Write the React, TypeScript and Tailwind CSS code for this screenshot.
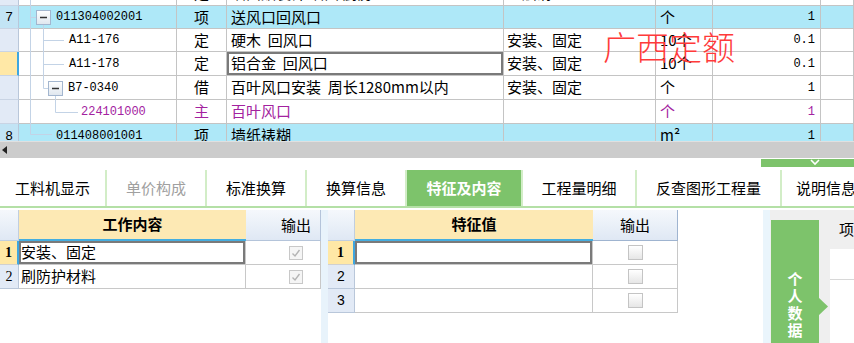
import React from 'react'

const cjk = "font-['Noto_Sans_CJK_SC',sans-serif]"
const mono = "font-['Liberation_Mono','Noto_Sans_CJK_SC',monospace]"

type Row = {
  num: string
  code: string
  type: string
  name: string
  feat: string
  unit: string
  qty: string
  h: string
  kind: 'plain' | 'group' | 'sel' | 'main'
  indent: string
}

const rows: Row[] = [
  { num: '', code: 'A11-200', type: '定', name: '墙面贴装饰 墙面 厨房', feat: '基层清理', unit: '100m²', qty: '0.00', h: 'h-[24px]', kind: 'plain', indent: 'pl-[50px]' },
  { num: '7', code: '011304002001', type: '项', name: '送风口回风口', feat: '', unit: '个', qty: '1', h: 'h-[23px]', kind: 'group', indent: 'pl-[37px]' },
  { num: '', code: 'A11-176', type: '定', name: '硬木  回风口', feat: '安装、固定', unit: '10个', qty: '0.1', h: 'h-[23px]', kind: 'plain', indent: 'pl-[50px]' },
  { num: '', code: 'A11-178', type: '定', name: '铝合金  回风口', feat: '安装、固定', unit: '10个', qty: '0.1', h: 'h-[24px]', kind: 'sel', indent: 'pl-[50px]' },
  { num: '', code: 'B7-0340', type: '借', name: '百叶风口安装  周长1280mm以内', feat: '安装、固定', unit: '个', qty: '1', h: 'h-[24px]', kind: 'plain', indent: 'pl-[49px]' },
  { num: '', code: '224101000', type: '主', name: '百叶风口', feat: '', unit: '个', qty: '1', h: 'h-[24px]', kind: 'main', indent: 'pl-[62px]' },
  { num: '8', code: '011408001001', type: '项', name: '墙纸裱糊', feat: '', unit: 'm²', qty: '1', h: 'h-[24px]', kind: 'group', indent: 'pl-[37px]' },
]

function TreeLines() {
  return (
    <svg className="absolute left-[19px] top-0 pointer-events-none" width="158" height="141">
      <defs>
        <linearGradient id="bx" x1="0" y1="0" x2="0" y2="1">
          <stop offset="0" stopColor="#ffffff" />
          <stop offset="1" stopColor="#dfe6ee" />
        </linearGradient>
      </defs>
      <g stroke="#c3d3e6" strokeWidth="1" fill="none">
        <line x1="11.5" y1="0" x2="11.5" y2="134.5" />
        <line x1="11.5" y1="17.5" x2="17" y2="17.5" />
        <line x1="11.5" y1="134.5" x2="33" y2="134.5" />
        <line x1="24.5" y1="25" x2="24.5" y2="88.5" />
        <line x1="24.5" y1="40.5" x2="45" y2="40.5" />
        <line x1="24.5" y1="64.5" x2="45" y2="64.5" />
        <line x1="24.5" y1="88.5" x2="29.5" y2="88.5" />
        <line x1="36.5" y1="96" x2="36.5" y2="112.5" />
        <line x1="36.5" y1="112.5" x2="59" y2="112.5" />
      </g>
      <rect x="17.5" y="10.5" width="14" height="14" fill="url(#bx)" stroke="#a3b6cf" />
      <line x1="21" y1="17.5" x2="28" y2="17.5" stroke="#333" strokeWidth="1.5" />
      <rect x="29.5" y="81.5" width="14" height="14" fill="url(#bx)" stroke="#a3b6cf" />
      <line x1="33" y1="88.5" x2="40" y2="88.5" stroke="#333" strokeWidth="1.5" />
    </svg>
  )
}

function TopGrid() {
  return (
    <div className="relative h-[141px] overflow-hidden bg-white">
      <div className="-mt-[18px]">
        {rows.map((r, i) => {
          const bg = r.kind === 'group' ? 'bg-[#aee8f8]' : 'bg-white'
          const color = r.kind === 'main' ? 'text-[#a3229f]' : 'text-black'
          const numCls =
            r.kind === 'group'
              ? 'bg-[#c2e4f5] border-r border-[#b9c7da]'
              : r.kind === 'sel'
                ? 'bg-[#ffe8a6] border-r-2 border-[#3ea6e0]'
                : 'bg-[#e2eaf6] border-r border-[#b9c7da]'
          const line = 'border-r border-b border-[#c4c4c4]'
          return (
            <div key={i} className={`flex ${r.h} ${bg} ${color} text-[15px] ${cjk}`}>
              <div className={`w-[19px] shrink-0 flex items-center justify-center border-b border-b-[#c9d4e4] text-[13px] text-black font-['Liberation_Sans',sans-serif] ${numCls}`}>
                {r.num}
              </div>
              <div className={`w-[158px] shrink-0 flex items-center ${line} ${r.indent} ${mono} text-[12px]`}>{r.code}</div>
              <div className={`w-[50px] shrink-0 flex items-center justify-center ${line}`}>{r.type}</div>
              <div className={`w-[277px] shrink-0 flex items-center pl-[4px] whitespace-pre ${line} ${r.kind === 'sel' ? 'shadow-[inset_0_0_0_2px_#7a7a7a]' : ''}`}>
                {r.name}
              </div>
              <div className={`w-[152px] shrink-0 flex items-center pl-[3px] ${line}`}>{r.feat}</div>
              <div className={`w-[57px] shrink-0 flex items-center pl-[4px] ${line}`}>{r.unit}</div>
              <div className={`w-[108px] shrink-0 flex items-center justify-end pr-[5px] ${line} ${mono} text-[12px]`}>{r.qty}</div>
              <div className={`flex-1 ${line}`}></div>
            </div>
          )
        })}
      </div>
      <TreeLines />
      <div className={`absolute left-[603px] top-[26px] text-[33px] leading-[40px] text-[#ff3a3a] font-extralight pointer-events-none ${cjk}`}>
        广西定额
      </div>
    </div>
  )
}

function Scrollbar() {
  return (
    <div className="h-[17px] bg-[#cccccc] flex items-center border-t border-[#e0e0e0]">
      <svg width="8" height="10" className="ml-[1px]">
        <path d="M6 1 L1 5 L6 9 Z" fill="#222" />
      </svg>
    </div>
  )
}

const tabs: { label: string; w: string; state?: 'dim' | 'on' }[] = [
  { label: '工料机显示', w: 'w-[107px]' },
  { label: '单价构成', w: 'w-[100px]', state: 'dim' },
  { label: '标准换算', w: 'w-[100px]' },
  { label: '换算信息', w: 'w-[100px]' },
  { label: '特征及内容', w: 'w-[116px]', state: 'on' },
  { label: '工程量明细', w: 'w-[114px]' },
  { label: '反查图形工程量', w: 'w-[145px]' },
  { label: '说明信息', w: 'w-[90px]' },
]

function Tabs() {
  return (
    <div className={`flex h-[38px] border-b-2 border-[#b4e0a6] overflow-hidden ${cjk}`}>
      {tabs.map((t) => (
        <div
          key={t.label}
          className={`${t.w} shrink-0 flex items-center justify-center text-[15px] whitespace-nowrap border-r-2 border-[#d2edc7] ${
            t.state === 'on' ? 'bg-[#7dc36b] text-white font-bold' : t.state === 'dim' ? 'text-[#a0a0a0] bg-white' : 'text-black bg-white'
          }`}
        >
          {t.label}
        </div>
      ))}
    </div>
  )
}

function Check({ on }: { on?: boolean }) {
  return on ? (
    <div className="w-[14px] h-[14px] border border-[#c8c8c8] bg-[#f5f5f5] flex items-center justify-center">
      <svg width="10" height="10" viewBox="0 0 10 10">
        <path d="M1.5 5.5 L4 8 L8.5 2" stroke="#b4b4b4" strokeWidth="1.4" fill="none" />
      </svg>
    </div>
  ) : (
    <div className="w-[15px] h-[15px] border border-[#c4c4c4] bg-gradient-to-b from-white to-[#e6e6e6]" />
  )
}

const hdrBlue = 'bg-gradient-to-b from-[#f5f8fc] to-[#dfe8f4]'

function LeftTable() {
  const items = ['安装、固定', '刷防护材料']
  return (
    <div className={`w-[321px] shrink-0 bg-white ${cjk}`}>
      <div className="flex h-[31px]">
        <div className={`w-[19px] shrink-0 ${hdrBlue} border-r border-b border-[#c0cee0]`} />
        <div className="w-[227px] shrink-0 bg-[#fde9b4] border-b-2 border-[#45aee0] flex items-center justify-center text-[15px] font-bold">
          工作内容
        </div>
        <div className={`w-[75px] shrink-0 ${hdrBlue} border-b border-r border-[#b4c4da] flex items-center justify-end pr-[9px] text-[15px]`}>
          输出
        </div>
      </div>
      {items.map((t, i) => (
        <div key={t} className="flex h-[24px]">
          <div
            className={`w-[19px] shrink-0 flex items-center justify-center text-[14px] border-b font-['Liberation_Serif',serif] ${
              i === 0 ? 'bg-[#ffe8a6] font-bold border-r-2 border-[#3ea6e0] border-b-[#d0d0d0]' : 'bg-[#e2eaf6] border-r border-[#b9c7da] font-[\'Liberation_Sans\',sans-serif]'
            }`}
          >
            {i + 1}
          </div>
          <div
            className={`w-[227px] shrink-0 flex items-center pl-[2px] text-[15px] border-r border-b border-[#c8c8c8] ${
              i === 0 ? 'shadow-[inset_0_0_0_2px_#7a7a7a]' : ''
            }`}
          >
            {t}
          </div>
          <div className="w-[75px] shrink-0 flex items-center justify-end pr-[17px] border-b border-r border-[#c8c8c8]">
            <Check on />
          </div>
        </div>
      ))}
    </div>
  )
}

function MiddleTable() {
  return (
    <div className={`flex-1 bg-white ${cjk}`}>
      <div className="flex h-[31px]">
        <div className={`w-[27px] shrink-0 ${hdrBlue} border-r border-b border-[#c0cee0]`} />
        <div className="w-[238px] shrink-0 bg-[#fde9b4] border-b-2 border-[#45aee0] flex items-center justify-center text-[15px] font-bold">
          特征值
        </div>
        <div className={`w-[85px] shrink-0 ${hdrBlue} border-b border-r border-[#9fb4d0] flex items-center justify-center text-[15px]`}>
          输出
        </div>
      </div>
      {[1, 2, 3].map((n) => (
        <div key={n} className="flex h-[24px]">
          <div
            className={`w-[27px] shrink-0 flex items-center justify-center text-[14px] border-b ${
              n === 1
                ? "bg-[#ffe8a6] font-bold border-r-2 border-[#3ea6e0] border-b-[#d0d0d0] font-['Liberation_Serif',serif]"
                : "bg-[#e2eaf6] border-r border-[#b9c7da] font-['Liberation_Sans',sans-serif]"
            }`}
          >
            {n}
          </div>
          <div
            className={`w-[238px] shrink-0 border-r border-b border-[#c8c8c8] ${
              n === 1 ? 'shadow-[inset_0_0_0_2px_#7a7a7a,inset_0_2px_0_0_#45aee0]' : ''
            }`}
          />
          <div className="w-[85px] shrink-0 flex items-center justify-center border-b border-r border-[#c8c8c8]">
            <Check />
          </div>
        </div>
      ))}
    </div>
  )
}

function SidePanel() {
  return (
    <div className="w-[91px] shrink-0 flex">
      <div className="w-[8px] bg-[#eaf5fc]" />
      <div className="flex-1 bg-[#efefef] flex">
        <div className="ml-[1px] mt-[10px] w-[48px] bg-[#7dc36b] relative flex flex-col items-center pt-[50px] text-white font-bold text-[15px] leading-[17px]">
          <span>个</span>
          <span>人</span>
          <span>数</span>
          <span>据</span>
          <svg className="absolute left-[47px] top-[77px]" width="11" height="19">
            <path d="M0 0 L10 9.5 L0 19 Z" fill="#7dc36b" />
          </svg>
        </div>
        <div className="ml-[11px] flex-1 flex flex-col">
          <div className="h-[39px] flex items-center pl-[9px] text-[15px]">项</div>
          <div className="flex-1 bg-white">
            <div className="h-[31px] border-b border-[#d8d8d8]" />
          </div>
        </div>
      </div>
    </div>
  )
}

export default function App() {
  return (
    <div className={`w-[854px] h-[343px] overflow-hidden bg-white ${cjk}`}>
      <TopGrid />
      <Scrollbar />
      <div className="h-[12px] flex justify-end">
        <div className="w-[93px] h-[8px] mt-[1px] bg-[#7dc36b] flex justify-center">
          <svg width="12" height="8" className="ml-[14px]">
            <path d="M2 1 L6 5 L10 1" stroke="#fff" strokeWidth="1.6" fill="none" />
          </svg>
        </div>
      </div>
      <Tabs />
      <div className="flex h-[135px] pt-[2px]">
        <LeftTable />
        <div className="w-[7px] shrink-0 bg-[#e8f3fb]" />
        <div className="w-[435px] shrink-0 flex bg-white">
          <MiddleTable />
        </div>
        <SidePanel />
      </div>
    </div>
  )
}
